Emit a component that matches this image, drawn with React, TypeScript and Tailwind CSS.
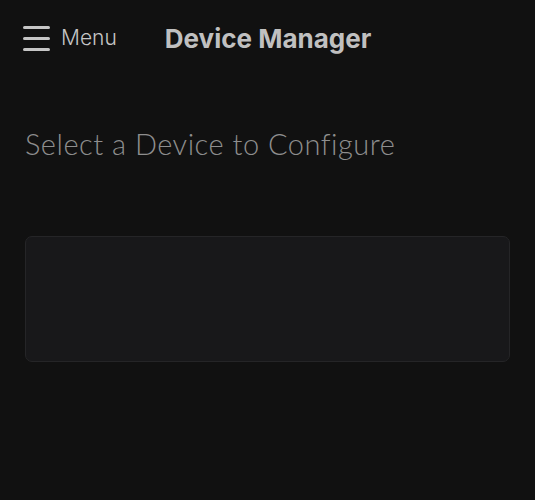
export default function App() {
  return (
    <div className="w-[535px] h-[500px] bg-[#111111] overflow-hidden" style={{ fontFamily: "Inter, 'Liberation Sans', sans-serif" }}>
      {/* HEADER */}
      <div className="flex items-center h-[76px] pl-[23px]">
        <button className="flex items-center gap-[11px] text-[#c6c6c6]">
          <span className="flex flex-col gap-[8px] w-[27px]">
            <span className="h-[3px] bg-[#c6c6c6] rounded-full" />
            <span className="h-[3px] bg-[#c6c6c6] rounded-full" />
            <span className="h-[3px] bg-[#c6c6c6] rounded-full" />
          </span>
          <span className="text-[21px] font-light">Menu</span>
        </button>
        <h1 className="ml-[48px] text-[26px] font-bold text-[#c0c0c0] tracking-[0px]">Device Manager</h1>
      </div>

      <div className="px-[25px]">
        <h2 className="mt-[46px] text-[29px] font-light text-[#8e8e8e] tracking-[0.5px]" style={{ fontFamily: "Lato, sans-serif" }}>
          Select a Device to Configure
        </h2>

        {/* DEVICE LIST */}
        <div className="mt-[70px] h-[126px] rounded-[7px] border border-[#252527] bg-[#18181a]" />
      </div>
    </div>
  );
}
